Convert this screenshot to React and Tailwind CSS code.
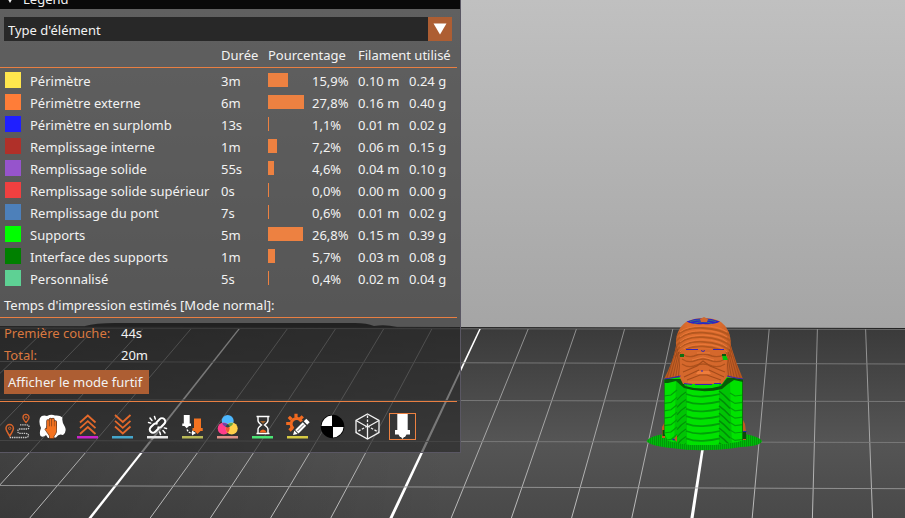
import React from "react";

const ROWS = [
  { name: "Périmètre", color: "#ffe64d", time: "3m", bar: 20, pct: "15,9%", m: "0.10 m", g: "0.24 g" },
  { name: "Périmètre externe", color: "#ff7d38", time: "6m", bar: 36, pct: "27,8%", m: "0.16 m", g: "0.40 g" },
  { name: "Périmètre en surplomb", color: "#1f1fff", time: "13s", bar: 1, pct: "1,1%", m: "0.01 m", g: "0.02 g" },
  { name: "Remplissage interne", color: "#b03029", time: "1m", bar: 9, pct: "7,2%", m: "0.06 m", g: "0.15 g" },
  { name: "Remplissage solide", color: "#9654cc", time: "55s", bar: 6, pct: "4,6%", m: "0.04 m", g: "0.10 g" },
  { name: "Remplissage solide supérieur", color: "#f04040", time: "0s", bar: 1, pct: "0,0%", m: "0.00 m", g: "0.00 g" },
  { name: "Remplissage du pont", color: "#4d80ba", time: "7s", bar: 1, pct: "0,6%", m: "0.01 m", g: "0.02 g" },
  { name: "Supports", color: "#00ff00", time: "5m", bar: 35, pct: "26,8%", m: "0.15 m", g: "0.39 g" },
  { name: "Interface des supports", color: "#008000", time: "1m", bar: 7, pct: "5,7%", m: "0.03 m", g: "0.08 g" },
  { name: "Personnalisé", color: "#5ed194", time: "5s", bar: 1, pct: "0,4%", m: "0.02 m", g: "0.04 g" },
];

const range = (n) => Array.from({ length: n }, (_, i) => i);

function Model() {
  return (
    <g>
      <defs>
        <pattern id="brim" width="2" height="4" patternUnits="userSpaceOnUse">
          <rect width="2" height="4" fill="#00b80a" />
          <rect width="1" height="4" fill="#009a08" />
        </pattern>
        <linearGradient id="hood" x1="0" y1="0" x2="1" y2="0">
          <stop offset="0" stopColor="#b3571f" />
          <stop offset="0.300" stopColor="#dc6c2e" />
          <stop offset="0.700" stopColor="#dc6c2e" />
          <stop offset="1" stopColor="#ad521f" />
        </linearGradient>
        <clipPath id="towerClip">
          <path d="M664.500 379L683 377L727 377L743 379L743 440L738 442L715 445L690 445L668 441L664.500 434Z" />
        </clipPath>
        <clipPath id="hoodClip">
          <path d="M664 379Q673 362 676 346Q675 330 686 322Q694 318 703 318Q715 318 721 322Q731 329 731 346Q736 363 743 379L727 377L722 384H683L679 376Z" />
        </clipPath>
      </defs>
      <path d="M646.500 441Q650 436 664 434L745 434Q760 437 762 441Q761 446 741 447Q704 453 671 448Q650 446 646.500 441Z" fill="url(#brim)" />
      <path d="M662 427l3-5v16h-3zM743 420l2 4 1 8v8h-4z" fill="#c25a20" />
      <path d="M662.500 430h3v6h-3zM743 432h3v7h-3z" fill="#0d4a0c" />
      <path d="M742.500 431.500h4" stroke="#2222aa" />
      <g clipPath="url(#towerClip)">
        <rect x="660" y="372" width="86" height="76" fill="#00e200" />
        <path d="M676 380h11v68h-13zM719 380h11l2 68h-13z" fill="#00c404" />
        {range(8).map((i) => {
          const y = 394 + i * 7.4;
          return (
            <g key={i} fill="none">
              <path d={`M686 ${y}Q694 ${y + 3} 703 ${y + 2.5}T720 ${y}`} stroke="#00a008" strokeWidth="1.800" />
              <path d={`M677 ${y + 6}Q681 ${y + 1} 686 ${y - 2}`} stroke="#009208" strokeWidth="1.200" />
              <path d={`M664 ${y + 2}L671 ${y + 1}L677 ${y - 4}`} stroke="#00a008" strokeWidth="1.200" />
              <path d={`M719 ${y - 3}L724 ${y + 1}L730 ${y + 7}`} stroke="#008c08" strokeWidth="1.500" />
              <path d={`M730 ${y - 1}L735 ${y + 2}L743 ${y + 1}`} stroke="#00a408" strokeWidth="1.200" />
            </g>
          );
        })}
        <path d="M664.500 380V440M742.500 380V440" stroke="#087608" />
        <path d="M664 379H681L685 386Q703 391 721 386L727 378H743V382L734 380L728 384L722 389Q703 394 684 388L676 381L668 383H664Z" fill="#065c08" />
      </g>
      <path d="M674 439l3-4v7z" fill="#c25a20" />
      <path d="M672.500 439l2 1" stroke="#2222aa" strokeWidth="1.500" />
      <g clipPath="url(#hoodClip)">
        <rect x="664" y="315" width="79" height="72" fill="url(#hood)" />
        {range(5).map((i) => (
          <g key={i} fill="none">
            <path d={`M675 ${337 + i * 5}Q684 ${327 + i * 4.6} 703 ${328 + i * 4.6}T732 ${337 + i * 5}`} stroke="#b4571f" strokeWidth="1.800" />
            <path d={`M680 ${332 + i * 5}Q687 ${326 + i * 4.6} 703 ${326 + i * 4.6}T727 ${332 + i * 5}`} stroke="#e97838" strokeWidth="1" />
          </g>
        ))}
        {range(5).map((i) => (
          <path key={i} d={`M${677 + i * 0.8} ${346 + i * 3}L${666 + i * 3} 381M${730 - i * 0.8} ${346 + i * 3}L${741 - i * 3} 381`} stroke="#98461b" strokeWidth="0.800" />
        ))}
        <path d="M682 349H725L727 361L725 377L721 384H684L680 376L680 359Z" fill="#d5682c" />
        {range(3).map((i) => (
          <path
            key={i}
            d={`M682 ${354 + i * 5}Q688 ${358 + i * 5} 694 ${356 + i * 5}Q703 ${352 + i * 5} 712 ${356 + i * 5}Q719 ${358 + i * 5} 725 ${354 + i * 5}`}
            fill="none"
            stroke="#ae521d"
            strokeWidth="1.400"
          />
        ))}
        <path d="M683 372L697 366L703 361L710 366L725 372M684 377L699 370M709 370L724 377M687 380L700 375H707L721 380" fill="none" stroke="#a54c1a" strokeWidth="1.200" />
        <path d="M697 353H710M692 360L703 357L714 360M688 382H719" fill="none" stroke="#e87a3a" />
        <path d="M698 371h11l2 3h-15z" fill="#ee7d3c" />
      </g>
      <path d="M686.500 321.500Q703 315 720 321.500Q714 325 703 324Q693 325 686.500 321.500Z" fill="#2b25c5" />
      <path d="M690 321.500Q703 318 716 321.500M694 323.500Q703 320 712 323.500" fill="none" stroke="#387080" />
      <path d="M700 319l4-2 4 2-1 3h-6z" fill="#cf672e" />
      <path d="M686 349.500H698M713 349.500H724M701 350.500l2 1 2-1M701 371h2M664.500 379l7-1 9-2M727 376l9 2 7 1M684 383.500l8 1M695 384.500h17M714 383.500h7" fill="none" stroke="#3525b5" />
      <path d="M680 354h4v3h-4z" fill="#106f10" />
      <path d="M722 355h4l2 5h-5z" fill="#00c40a" />
      <path d="M722 354h4v2h-4z" fill="#0c580c" />
    </g>
  );
}

function Scene() {
  return (
    <svg className="absolute inset-0 h-full w-full" viewBox="0 0 905 518" preserveAspectRatio="xMinYMin slice" aria-hidden="true">
      <defs>
        <linearGradient id="sky" x1="0" y1="0" x2="0" y2="1">
          <stop offset="0" stopColor="#c0c0c0" />
          <stop offset="1" stopColor="#a5a5a5" />
        </linearGradient>
        <linearGradient id="bed" x1="0" y1="0" x2="0" y2="1">
          <stop offset="0" stopColor="#3a3a3a" />
          <stop offset="0.600" stopColor="#555555" />
          <stop offset="1" stopColor="#494949" />
        </linearGradient>
        <linearGradient id="leftShade" x1="0" y1="0" x2="1" y2="0">
          <stop offset="0" stopColor="#000" stopOpacity="0.220" />
          <stop offset="0.500" stopColor="#000" stopOpacity="0" />
        </linearGradient>
        <linearGradient id="gridLine" gradientUnits="userSpaceOnUse" x1="0" y1="328" x2="0" y2="518">
          <stop offset="0" stopColor="#8c8c8c" />
          <stop offset="1" stopColor="#bcbcbc" />
        </linearGradient>
      </defs>
      <rect width="905" height="328" fill="url(#sky)" />
      <path d="M85 326Q95 323 115 323H355Q367 323 374 326Q385 324 397 327V330H85Z" fill="#1c1c1c" />
      <path d="M0 326.500L905 328.500V518H0Z" fill="url(#bed)" />
      <path d="M0 326.500L905 328.500V518H0Z" fill="url(#leftShade)" />
      <path d="M0 326.500L905 328.500" stroke="#242424" />
      <path d="M0 328L905 329.500" stroke="#7c7c7c" strokeWidth="0.700" />
      {range(23).map((i) => {
        const k = i - 18;
        const thick = k % 5 === 0;
        const top = 721 + 48.2 * k;
        const bottom = 692 + 60.2 * k;
        return thick ? (
          <path key={k} d={`M${top - 0.8} 329H${top + 0.8}L${bottom + 1.6} 518H${bottom - 1.6}Z`} fill="#fff" />
        ) : (
          <path key={k} d={`M${top} 329L${bottom} 518`} stroke="url(#gridLine)" strokeWidth="1" />
        );
      })}
      <path d="M0 361.500L905 364M0 399.500L905 401.500M0 440.500L905 442.500" stroke="#7d7d7d" strokeWidth="0.900" />
      <path d="M0 485.500L905 488.700" stroke="#989898" strokeWidth="0.900" />
      <Model />
    </svg>
  );
}

const CHAIN = (
  <g fill="none" stroke="#fff" strokeLinecap="round">
    <g strokeWidth="2">
      <path d="M12.500 9.500l3.200-3.400a3.200 3.200 0 0 1 4.600 4.600l-3 3.100a3 3 0 0 1-3 .6" />
      <path d="M14.500 15.500l-3.200 3.300a3.200 3.200 0 0 1-4.600-4.600l3-3a3 3 0 0 1 3-.6" />
    </g>
    <path strokeWidth="1.500" d="M10.500 3.500l.8 2.500M6 5l2 2.500M4.500 9.500l2.200.6M16.500 21.500l-.8-2.500M21 20l-2-2.500M22.500 15.500l-2.200-.6" />
  </g>
);

const TOOLS = [
  {
    label: "Déplacements",
    art: (
      <g fill="none" stroke="#d9642a">
        <path strokeWidth="1.500" d="M5.700 23Q2 17.500 2 15.300A3.700 3.700 0 0 1 9.400 15.300Q9.400 17.500 5.700 23Z" />
        <circle cx="5.700" cy="15.300" r="1.200" />
        <path strokeWidth="1.300" d="M22 9.500Q19 6 19 4.400A3 3 0 0 1 25 4.400Q25 6 22 9.500Z" />
        <circle cx="22" cy="4.400" r="0.800" />
        <path stroke="#c8c8c8" strokeWidth="1.300" strokeDasharray="1.400 0.800" d="M5.700 24.500H21.500Q24.500 24.500 24.500 22.500T21.500 20.300H16Q13.800 20.300 13.800 18.200T16 16H22.500Q25 16 25 14T22.500 11.800H16" />
      </g>
    ),
  },
  {
    label: "Essuyage",
    art: (
      <g>
        <path fill="#fff" d="M1 5Q3 1.500 8 3Q12 1 16 2.500Q21 2 23.500 4.500Q22.500 9 26 14Q28 19 24 22Q20 20 17 24.500L9 25L7 22Q4 25 1.500 23Q0 20 2 15Q-.5 10 1 5Z" />
        <path fill="none" stroke="#5c3019" strokeWidth="3.400" strokeLinecap="round" d="M9 8V15M11.500 6.500V15M14 6.500V15M16.300 9V15" />
        <path fill="#f47321" stroke="#5c3019" strokeWidth="0.700" d="M8 13H17.500V19Q16.500 22 15 23V25.500H10.500V23L6 16.500Q6 14.500 8 15.500Z" />
        <path fill="none" stroke="#f47321" strokeWidth="1.900" strokeLinecap="round" d="M9 8V16M11.500 6.500V16M14 6.500V16M16.300 9V16" />
      </g>
    ),
  },
  {
    label: "Rétractions",
    line: "#c923c9",
    art: <path fill="none" stroke="#e4692b" strokeWidth="1.800" d="M6 9.500L13.800 2.500L21.500 9.500M6 15.200L13.800 8.200L21.500 15.200M6 21L13.800 14L21.500 21" />,
  },
  {
    label: "Réinsertions",
    line: "#45a6cb",
    art: <path fill="none" stroke="#e4692b" strokeWidth="1.800" d="M6 2L13.800 9L21.500 2M6 7.800L13.800 14.800L21.500 7.800M6 13.500L13.800 20.500L21.500 13.500" />,
  },
  { label: "Jointures", line: "#e6e6e6", art: CHAIN },
  {
    label: "Changements d'outil",
    line: "#b9b958",
    art: (
      <g>
        <path fill="#fff" d="M4.800 2H10.700V10.500H12V13H10L7.700 15.300L5.500 13H3.300V10.500H4.800Z" />
        <path fill="#f47321" d="M15 5.500H22V15H23.700V18H21.500L18.500 21L15.700 18H13.500V15H15Z" />
        <path fill="none" stroke="#fff" strokeWidth="1.300" strokeDasharray="2 1" d="M8 16.500Q9.500 20 13.500 20" />
        <path fill="#fff" d="M13 17.500L17 20L13 22.500Z" />
      </g>
    ),
  },
  {
    label: "Changements de couleur",
    line: "#df9188",
    art: (
      <g>
        <circle cx="13.700" cy="8" r="6" fill="#4db8ff" />
        <circle cx="9.700" cy="15.500" r="6" fill="#ff3d8b" />
        <circle cx="17.700" cy="15.500" r="6" fill="#ffd04a" />
        <path fill="#6b45a5" d="M8.200 10.200A6 6 0 0 1 13.500 11.200L13.700 14A6 6 0 0 1 8.200 10.200Z" />
        <path fill="#5fa548" d="M19.200 10.200A6 6 0 0 0 13.900 11.200L13.700 14A6 6 0 0 0 19.200 10.200Z" />
        <path fill="#ee5733" d="M13.700 11Q16 13.500 15.700 15.500Q15.500 18 13.700 20Q11.900 18 11.700 15.500Q11.500 13.500 13.700 11Z" />
        <path fill="#284850" d="M13.700 11L16 13.500L13.700 14.500L11.400 13.500Z" />
      </g>
    ),
  },
  {
    label: "Pauses d'impression",
    line: "#4be374",
    art: (
      <g fill="none" stroke="#fff">
        <path strokeWidth="1.700" d="M7.500 3.500H20.500M7.500 20.500H20.500" />
        <path strokeWidth="1.400" d="M9 4V7.500Q9 9.500 12.500 12Q9 14.500 9 16.500V20M19 4V7.500Q19 9.500 15.500 12Q19 14.500 19 16.500V20" />
        <path fill="#a0622c" stroke="none" d="M11 8H17L14 10.800Z" />
        <path fill="#f4651d" stroke="none" d="M10.500 19.500Q11 17 14 16.500Q17 17 17.500 19.500Z" />
      </g>
    ),
  },
  {
    label: "G-code personnalisé",
    line: "#d5c943",
    art: (
      <g>
        <path fill="none" stroke="#f26a20" strokeWidth="3" d="M9.500 15.500A5.500 5.500 0 1 1 17.500 8.500" />
        <path stroke="#f26a20" strokeWidth="3.200" d="M12 4.500V.8M7.500 6.500L4.800 3.800M6 10.500H2.200M8.500 14.500L5.500 17.500M16 6L18.800 3.300" />
        <path fill="#fff" d="M9 22L10.300 17.500L13.700 21Z" />
        <path stroke="#fff" strokeWidth="4.800" d="M12.800 18.700L20.500 11" />
        <path stroke="#fff" strokeWidth="4.800" d="M21.500 10L24 7.500" />
        <path stroke="#333" strokeWidth="0.800" d="M13.500 18L20 11.500" />
      </g>
    ),
  },
  {
    label: "Centre de gravité",
    art: (
      <g>
        <circle cx="13.500" cy="13.500" r="11.800" fill="#000" />
        <path fill="#fff" d="M13 13V2.500A10.800 10.800 0 0 0 2.500 13ZM14 14V24.500A10.800 10.800 0 0 0 24.500 14Z" />
      </g>
    ),
  },
  {
    label: "Coques",
    art: (
      <g fill="none" stroke="#f2f2f2" strokeWidth="1.300">
        <path d="M13.500 1L25 7.500V19.500L13.500 26L2 19.500V7.500Z" />
        <path d="M13.500 14V26M13.500 14L25 7.500M13.500 14L2 7.500" />
        <path strokeDasharray="2.500 1.500" d="M13.500 13V1M13.500 13L2 19.500M13.500 13L25 19.500" />
      </g>
    ),
  },
  {
    label: "Marqueur d'outil",
    active: true,
    art: <path fill="#fff" d="M8.300 1H18.700V17H21V21.500H17.500L16 24H15L13.500 26L12 24H11L9.500 21.500H6V17H8.300Z" />,
  },
];

export default function App() {
  return (
    <main className="relative min-h-screen overflow-hidden bg-[#474747] font-['Noto_Sans',sans-serif] text-[13px] leading-[18px] text-[#f2f2f2]">
      <Scene />
      <section className="relative w-[461px] max-w-full border-r border-b border-[#5a5763] bg-[#252525]/62" aria-label="Legend">
        <header className="flex h-[9px] items-end overflow-hidden bg-[#0a0a0a]">
          <button type="button" className="flex shrink-0 items-center gap-2 px-[5px] pb-px" aria-expanded="true">
            <svg className="h-[10px] w-[10px]" viewBox="0 0 10 10" aria-hidden="true">
              <path d="M0 0H10L5 9Z" fill="#f2f2f2" />
            </svg>
            <span>Legend</span>
          </button>
        </header>

        <div className="relative mt-2 mr-2 ml-1">
          <select aria-label="Type de vue" className="block h-6 w-full appearance-none rounded-none bg-[#282828] pt-[2px] pr-7 pl-1" defaultValue="feature">
            <option value="feature">Type d'élément</option>
          </select>
          <span className="pointer-events-none absolute inset-y-0 right-0 flex w-6 items-center justify-center bg-[#ad5e33]">
            <svg className="h-3 w-[14px]" viewBox="0 0 14 12" aria-hidden="true">
              <path d="M0.500 0.500H13.500L7 11.500Z" fill="#fff" />
            </svg>
          </span>
        </div>

        <table className="mt-[2px] w-[457px] table-fixed border-separate border-spacing-0 text-left whitespace-nowrap">
          <colgroup>
            <col className="w-[221px]" />
            <col className="w-[47px]" />
            <col className="w-[90px]" />
            <col className="w-[51px]" />
            <col />
          </colgroup>
          <thead>
            <tr className="h-[25px] *:border-b *:border-[#e97f42] *:p-0 *:font-normal">
              <td></td>
              <th scope="col">Durée</th>
              <th scope="col">Pourcentage</th>
              <th scope="col" colSpan={2}>Filament utilisé</th>
            </tr>
          </thead>
          <tbody className="before:block before:h-[2px]">
            {ROWS.map((r) => (
              <tr key={r.name} className="h-[22px] *:p-0 *:font-normal">
                <th scope="row">
                  <span className="flex items-center gap-[9px] pl-[5px]">
                    <span className="mb-[2px] size-4" style={{ backgroundColor: r.color }} />
                    {r.name}
                  </span>
                </th>
                <td>{r.time}</td>
                <td>
                  <span className="flex items-center">
                    <span className="flex w-11">
                      <span className="mb-[2px] h-[14px] bg-[#ed8141]" style={{ width: r.bar }} />
                    </span>
                    {r.pct}
                  </span>
                </td>
                <td>{r.m}</td>
                <td>{r.g}</td>
              </tr>
            ))}
          </tbody>
        </table>

        <h2 className="mt-1 mr-[3px] flex h-6 items-center border-b border-[#e97f42] pb-[2px] pl-1">
          Temps d'impression estimés [Mode normal]:
        </h2>
        <dl className="mt-1 grid grid-cols-[117px_1fr] pl-1 leading-[22px]">
          <dt className="text-[#d9783f]">Première couche:</dt>
          <dd>44s</dd>
          <dt className="text-[#d9783f]">Total:</dt>
          <dd>20m</dd>
        </dl>
        <button type="button" className="mt-1 ml-1 block h-6 min-w-[145px] bg-[#ad5e33] px-1 text-left">
          Afficher le mode furtif
        </button>

        <div className="mt-[7px] mr-[3px] flex gap-2 border-t border-[#e97f42] pt-[11px] pb-3 pl-1">
          {TOOLS.map((t) => (
            <button
              key={t.label}
              type="button"
              aria-label={t.label}
              aria-pressed={Boolean(t.active)}
              className={t.active ? "size-[27px] shrink-0 outline -outline-offset-1 outline-[#ed8141]" : "size-[27px] shrink-0"}
            >
              <svg className="size-[27px]" viewBox="0 0 27 27" aria-hidden="true">
                {t.art}
                {t.line && <rect x="3" y="23" width="21" height="2.500" fill={t.line} />}
              </svg>
            </button>
          ))}
        </div>
      </section>
    </main>
  );
}
